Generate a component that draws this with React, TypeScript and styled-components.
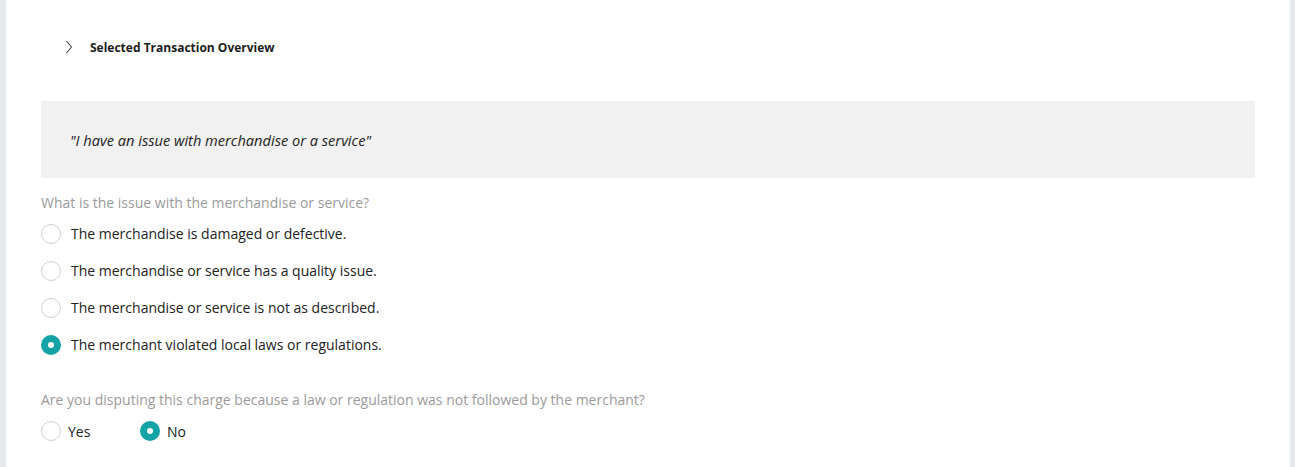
import React, { useState } from "react";
import styled, { createGlobalStyle } from "styled-components";

const Global = createGlobalStyle`
  html, body { margin: 0; padding: 0; }
  body {
    background: #e6eaed;
    font-family: "Open Sans", "Liberation Sans", sans-serif;
    color: #222;
  }
`;

const Page = styled.div`
  display: flex;
  padding: 0 5px 0 6px;
  min-height: 467px;
`;

const Panel = styled.main`
  flex: 1;
  background: #fff;
  padding: 30px 35px 26px 35px;
  box-sizing: border-box;
  min-height: 467px;
`;

const Header = styled.button`
  display: flex;
  align-items: center;
  height: 34px;
  padding: 0 0 0 24px;
  gap: 17px;
  border: none;
  background: none;
  cursor: pointer;
  font-family: inherit;
`;

const HeaderTitle = styled.span`
  font-size: 12px;
  font-weight: 700;
  color: #1c1c1c;
`;

const QuoteBox = styled.div`
  margin-top: 37px;
  height: 77px;
  background: #f1f1f1;
  display: flex;
  align-items: center;
  padding-left: 29px;
`;

const Quote = styled.span`
  font-size: 14.6px;
  font-style: italic;
  color: #222;
`;

const Question = styled.div<{ $top: number }>`
  margin-top: ${(p) => p.$top}px;
  font-size: 14px;
  line-height: 18px;
  color: #9a9a9a;
`;

const OptionList = styled.div`
  display: flex;
  flex-direction: column;
  margin-top: 3px;
`;

const InlineOptions = styled.div`
  display: flex;
  margin-top: 12px;
`;

const Option = styled.label<{ $width?: number; $gap: number }>`
  display: flex;
  align-items: center;
  gap: ${(p) => p.$gap}px;
  height: ${(p) => (p.$width ? 20 : 37)}px;
  width: ${(p) => (p.$width ? `${p.$width}px` : "auto")};
  font-size: 14px;
  color: #222;
  cursor: pointer;
`;

const Radio = styled.span<{ $checked: boolean }>`
  width: 20px;
  height: 20px;
  border-radius: 50%;
  box-sizing: border-box;
  flex: none;
  display: flex;
  align-items: center;
  justify-content: center;
  border: ${(p) => (p.$checked ? "none" : "1px solid #cfd3d6")};
  background: ${(p) => (p.$checked ? "#13a3a6" : "#fff")};
  &::after {
    content: "";
    display: ${(p) => (p.$checked ? "block" : "none")};
    width: 6px;
    height: 6px;
    border-radius: 50%;
    background: #fff;
  }
`;

const Chevron = () => (
  <svg width="8" height="14" viewBox="0 0 8 14" aria-hidden="true">
    <path d="M1.5 1 L6.5 7 L1.5 13" fill="none" stroke="#444" strokeWidth="1.1" />
  </svg>
);

const issues = [
  "The merchandise is damaged or defective.",
  "The merchandise or service has a quality issue.",
  "The merchandise or service is not as described.",
  "The merchant violated local laws or regulations.",
];

export default function App() {
  const [issue, setIssue] = useState(3);
  const [law, setLaw] = useState("No");
  return (
    <>
      <Global />
      <Page>
        <Panel>
          <Header>
            <Chevron />
            <HeaderTitle>Selected Transaction Overview</HeaderTitle>
          </Header>
          <QuoteBox>
            <Quote>"I have an issue with merchandise or a service"</Quote>
          </QuoteBox>
          <Question $top={16}>What is the issue with the merchandise or service?</Question>
          <OptionList>
            {issues.map((t, i) => (
              <Option key={t} $gap={10} onClick={() => setIssue(i)}>
                <Radio $checked={issue === i} />
                {t}
              </Option>
            ))}
          </OptionList>
          <Question $top={28}>
            Are you disputing this charge because a law or regulation was not followed by the merchant?
          </Question>
          <InlineOptions>
            {["Yes", "No"].map((t) => (
              <Option key={t} $width={99} $gap={7} onClick={() => setLaw(t)}>
                <Radio $checked={law === t} />
                {t}
              </Option>
            ))}
          </InlineOptions>
        </Panel>
      </Page>
    </>
  );
}
